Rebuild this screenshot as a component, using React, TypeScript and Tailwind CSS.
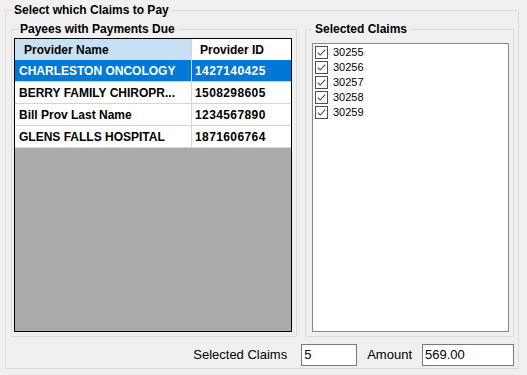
import React from "react";

type Payee = { name: string; id: string };

const payees: Payee[] = [
  { name: "CHARLESTON ONCOLOGY", id: "1427140425" },
  { name: "BERRY FAMILY CHIROPR...", id: "1508298605" },
  { name: "Bill Prov Last Name", id: "1234567890" },
  { name: "GLENS FALLS HOSPITAL", id: "1871606764" },
];

const claims = ["30255", "30256", "30257", "30258", "30259"];

function CheckBox() {
  return (
    <svg width="13" height="13" viewBox="0 0 13 13" className="shrink-0">
      <rect x="0.5" y="0.5" width="12" height="12" fill="#fff" stroke="#4d4d4d" />
      <path d="M2.8 6.6 L5.2 9 L10.2 3.6" fill="none" stroke="#4d4d4d" strokeWidth="1.1" />
    </svg>
  );
}

function GroupTitle({ children, indent }: { children: React.ReactNode; indent: string }) {
  return (
    <div className={`-mt-[8px] ${indent} w-fit bg-[#f0f0f0] px-[2px] text-[12px] font-bold leading-[14px]`}>
      {children}
    </div>
  );
}

export default function App() {
  return (
    <div className="h-[375px] w-[527px] bg-[#f0f0f0] pt-[10px] font-['Liberation_Sans',Arial,sans-serif] text-black">
      <div className="ml-[5px] h-[359px] w-[514px] border border-[#dcdcdc]">
        <GroupTitle indent="ml-[6px]">Select which Claims to Pay</GroupTitle>

        <div className="ml-[5px] mt-[12px] flex">
          {/* Payees grid */}
          <div className="h-[308px] w-[286px] border border-[#dcdcdc]">
            <GroupTitle indent="ml-[6px]">Payees with Payments Due</GroupTitle>
            <div className="ml-[2px] mt-[2px] flex h-[294px] w-[278px] flex-col border border-black bg-[#ababab] text-[12px] font-bold">
              <div className="flex h-[21px] shrink-0 items-center">
                <div className="flex h-full w-[177px] items-center border-r border-[#d4d4d4] bg-[#c7e0f4] pl-[9px]">
                  Provider Name
                </div>
                <div className="flex h-full flex-1 items-center bg-white pl-[8px]">Provider ID</div>
              </div>
              {payees.map((p, i) => (
                <div
                  key={p.id}
                  className={`flex h-[22px] shrink-0 items-center border-b border-[#d4d4d4] ${
                    i === 0 ? "bg-[#0078d7] text-white" : "bg-white"
                  }`}
                >
                  <div className="flex h-full w-[177px] items-center overflow-hidden whitespace-nowrap border-r border-[#d4d4d4] pl-[4px]">
                    {p.name}
                  </div>
                  <div className="flex h-full flex-1 items-center pl-[3px] tracking-[0.4px]">{p.id}</div>
                </div>
              ))}
            </div>
          </div>

          {/* Selected claims */}
          <div className="ml-[8px] h-[308px] w-[209px] border border-[#dcdcdc]">
            <GroupTitle indent="ml-[7px]">Selected Claims</GroupTitle>
            <div className="ml-[6px] mt-[7px] h-[289px] w-[197px] border border-[#828790] bg-white pl-[2px] pt-[1px] text-[11px]">
              {claims.map((c) => (
                <div key={c} className="flex h-[15px] items-center gap-[5px]">
                  <CheckBox />
                  <span className="leading-[13px]">{c}</span>
                </div>
              ))}
            </div>
          </div>
        </div>

        <div className="mt-[7px] flex items-center justify-end pr-[4px] text-[13px]">
          <span>Selected Claims</span>
          <div className="ml-[14px] h-[22px] w-[56px] border border-[#7a7a7a] bg-white pl-[2px] leading-[20px]">5</div>
          <span className="ml-[10px]">Amount</span>
          <div className="ml-[10px] h-[22px] w-[92px] border border-[#7a7a7a] bg-white pl-[2px] leading-[20px]">569.00</div>
        </div>
      </div>
    </div>
  );
}
